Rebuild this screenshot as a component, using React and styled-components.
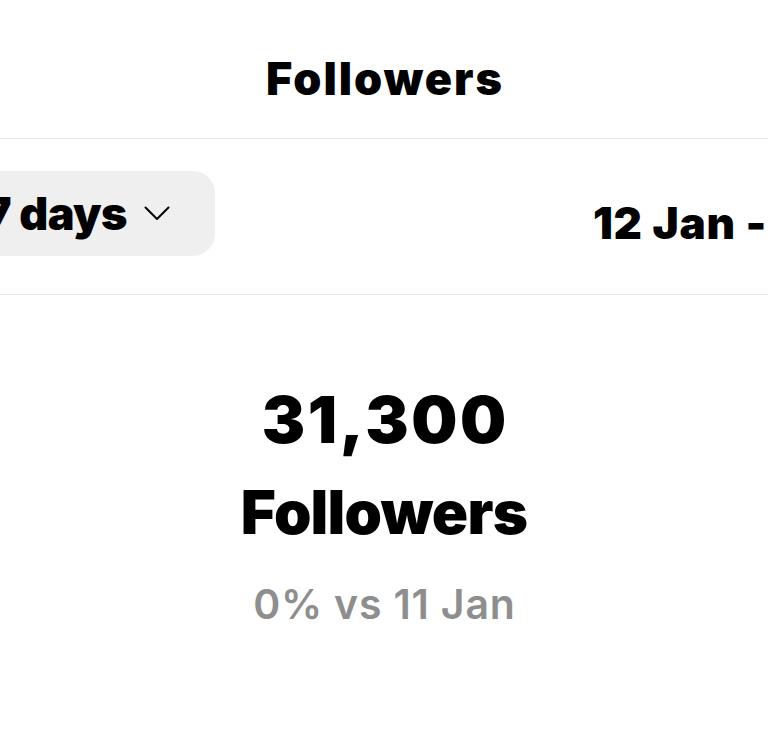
import React from "react";
import styled, { createGlobalStyle } from "styled-components";

const Global = createGlobalStyle`
  html, body { margin: 0; padding: 0; background: #ffffff; }
  body { overflow: hidden; font-family: Inter, "Noto Sans", sans-serif; color: #000; }
`;

const Page = styled.div`
  width: 768px;
  height: 750px;
  overflow: hidden;
  display: flex;
  flex-direction: column;
`;

const Header = styled.header`
  height: 139px;
  box-sizing: border-box;
  padding-top: 56px;
  display: flex;
  justify-content: center;
  border-bottom: 1px solid #e6e6e6;
`;

const Title = styled.h1`
  margin: 0;
  font-size: 45px;
  line-height: 1;
  font-weight: 900;
  letter-spacing: 2px;
  text-indent: 2px;
`;

const Toolbar = styled.div`
  height: 156px;
  box-sizing: border-box;
  padding-top: 32px;
  display: flex;
  align-items: flex-start;
  gap: 378px;
  white-space: nowrap;
  border-bottom: 1px solid #e6e6e6;
`;

const RangePill = styled.button`
  flex: none;
  margin-left: ${(p) => p.$offset}px;
  height: 85px;
  box-sizing: border-box;
  padding: 0 45px 0 46px;
  border: none;
  border-radius: 22px;
  background: #efefef;
  display: flex;
  align-items: center;
  gap: 17px;
  font-family: inherit;
  font-size: 45px;
  line-height: 1;
  font-weight: 900;
  color: #000;
  letter-spacing: -0.6px;
`;

const DateRange = styled.div`
  flex: none;
  margin-top: 30px;
  font-size: 44px;
  line-height: 1;
  font-weight: 900;
  letter-spacing: 0.8px;
`;

const Stats = styled.section`
  padding-top: 92px;
  display: flex;
  flex-direction: column;
  align-items: center;
`;

const Count = styled.div`
  font-size: 65px;
  line-height: 1;
  font-weight: 900;
  letter-spacing: 2.5px;
  text-indent: 2.5px;
`;

const Label = styled.div`
  margin-top: 30px;
  font-size: 60px;
  line-height: 1;
  font-weight: 900;
  letter-spacing: -0.8px;
`;

const Compare = styled.div`
  margin-top: 42px;
  font-size: 41px;
  line-height: 1;
  font-weight: 600;
  color: #8e8e8e;
  letter-spacing: 0.8px;
  text-indent: 0.8px;
`;

const Chevron = () => (
  <svg width="26" height="15" viewBox="0 0 26 15" fill="none">
    <polyline points="1.5,1.5 13,13 24.5,1.5" stroke="#000" strokeWidth="2" strokeLinecap="round" strokeLinejoin="round" />
  </svg>
);

export default function App() {
  return (
    <Page>
      <Global />
      <Header>
        <Title>Followers</Title>
      </Header>
      <Toolbar>
        <RangePill $offset={-164}>
          Last 7 days
          <Chevron />
        </RangePill>
        <DateRange>12 Jan - 18 Jan</DateRange>
      </Toolbar>
      <Stats>
        <Count>31,300</Count>
        <Label>Followers</Label>
        <Compare>0% vs 11 Jan</Compare>
      </Stats>
    </Page>
  );
}
